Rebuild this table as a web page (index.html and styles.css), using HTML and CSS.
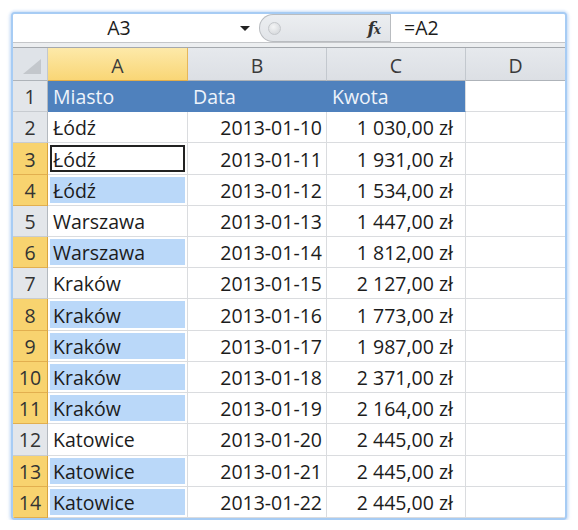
FILE: index.html
```html
<!DOCTYPE html>
<html>
<head>
<meta charset="utf-8">
<link rel="stylesheet" href="styles.css">
</head>
<body>
<div class="frame">
  <div class="fbar">
    <div class="namebox"><span class="ref">A3</span><span class="arrow"></span></div>
    <div class="pill">
      <span class="knob"></span>
      <span class="fx"><i>f</i><i class="x">x</i></span>
    </div>
    <div class="input">=A2</div>
  </div>
  <div class="sep"></div>
  <div class="sheet">
    <div class="corner"><svg width="18" height="15" viewBox="0 0 18 15"><polygon points="0,15 18,15 18,0" fill="#c3c7cc"/></svg></div>
    <div class="ch selcol">A</div>
    <div class="ch">B</div>
    <div class="ch">C</div>
    <div class="ch last">D</div>

    <div class="rh">1</div>
    <div class="c hd">Miasto</div>
    <div class="c hd">Data</div>
    <div class="c hd hdend">Kwota</div>
    <div class="c e"></div>

    <div class="rh">2</div>
    <div class="c">Łódź</div>
    <div class="c r">2013-01-10</div>
    <div class="c m">1 030,00 zł</div>
    <div class="c e"></div>

    <div class="rh sr">3</div>
    <div class="c act">Łódź</div>
    <div class="c r">2013-01-11</div>
    <div class="c m">1 931,00 zł</div>
    <div class="c e"></div>

    <div class="rh sr">4</div>
    <div class="c sel">Łódź</div>
    <div class="c r">2013-01-12</div>
    <div class="c m">1 534,00 zł</div>
    <div class="c e"></div>

    <div class="rh">5</div>
    <div class="c">Warszawa</div>
    <div class="c r">2013-01-13</div>
    <div class="c m">1 447,00 zł</div>
    <div class="c e"></div>

    <div class="rh sr">6</div>
    <div class="c sel">Warszawa</div>
    <div class="c r">2013-01-14</div>
    <div class="c m">1 812,00 zł</div>
    <div class="c e"></div>

    <div class="rh">7</div>
    <div class="c">Kraków</div>
    <div class="c r">2013-01-15</div>
    <div class="c m">2 127,00 zł</div>
    <div class="c e"></div>

    <div class="rh sr">8</div>
    <div class="c sel">Kraków</div>
    <div class="c r">2013-01-16</div>
    <div class="c m">1 773,00 zł</div>
    <div class="c e"></div>

    <div class="rh sr">9</div>
    <div class="c sel">Kraków</div>
    <div class="c r">2013-01-17</div>
    <div class="c m">1 987,00 zł</div>
    <div class="c e"></div>

    <div class="rh sr">10</div>
    <div class="c sel">Kraków</div>
    <div class="c r">2013-01-18</div>
    <div class="c m">2 371,00 zł</div>
    <div class="c e"></div>

    <div class="rh sr">11</div>
    <div class="c sel">Kraków</div>
    <div class="c r">2013-01-19</div>
    <div class="c m">2 164,00 zł</div>
    <div class="c e"></div>

    <div class="rh">12</div>
    <div class="c">Katowice</div>
    <div class="c r">2013-01-20</div>
    <div class="c m">2 445,00 zł</div>
    <div class="c e"></div>

    <div class="rh sr">13</div>
    <div class="c sel">Katowice</div>
    <div class="c r">2013-01-21</div>
    <div class="c m">2 445,00 zł</div>
    <div class="c e"></div>

    <div class="rh sr">14</div>
    <div class="c sel">Katowice</div>
    <div class="c r">2013-01-22</div>
    <div class="c m">2 445,00 zł</div>
    <div class="c e"></div>
  </div>
</div>
</body>
</html>
```
FILE: styles.css
```css
* { box-sizing: border-box; }
html, body { margin: 0; padding: 0; background: #fff; }
body {
  font-family: "Open Sans", "Liberation Sans", sans-serif;
  font-size: 19.5px;
  color: #1c1c1c;
}
.frame {
  margin: 12px 0 0 11px;
  width: 556px;
  height: 508px;
  border: 2px solid #a7ccf4;
  border-radius: 4px;
  box-shadow: 0 0 3px 1px #c9def8, 0 2px 4px rgba(120,160,220,0.35);
  background: #fff;
  display: flex;
  flex-direction: column;
  overflow: hidden;
}
.fbar {
  height: 28px;
  display: flex;
  background: #fff;
}
.namebox {
  width: 246px;
  display: flex;
  align-items: center;
  position: relative;
}
.ref {
  width: 212px;
  text-align: center;
  line-height: 28px;
}
.arrow {
  margin-left: 15px;
  width: 0; height: 0;
  border-left: 5px solid transparent;
  border-right: 5px solid transparent;
  border-top: 5px solid #222;
}
.pill {
  width: 131px;
  height: 28px;
  background: linear-gradient(#eceef1, #e1e4e8);
  border: 1px solid #b9bcc0;
  border-right: none;
  border-radius: 14px 0 0 14px;
  display: flex;
  align-items: center;
  justify-content: space-between;
  padding: 0 10px 0 8px;
}
.knob {
  width: 13px; height: 13px;
  border-radius: 50%;
  background: radial-gradient(circle at 40% 35%, #f4f5f6, #cfd2d6);
  border: 1px solid #c4c7cb;
}
.fx {
  font-family: "DejaVu Serif", "Liberation Serif", serif;
  font-weight: bold;
  font-size: 17px;
  color: #333;
  letter-spacing: -1px;
}
.fx .x { font-size: 12px; }
.input {
  flex: 1;
  border-left: 1px solid #b9bcc0;
  padding-left: 13px;
  line-height: 28px;
}
.sep {
  height: 6px;
  border-top: 1px solid #c4c6c9;
  border-bottom: 1px solid #a4a8ad;
  background: #eceef0;
}
.sheet {
  flex: 1;
  display: grid;
  grid-template-columns: 35px 140px 139px 139px 99px;
  grid-template-rows: 33px repeat(14, 1fr);
}
.corner {
  background: #dfe3e8;
  border-right: 1px solid #c3c8ce;
  border-bottom: 1px solid #aeb3b9;
  display: flex;
  align-items: flex-end;
  justify-content: flex-end;
  padding: 0 6px 6px 0;
}
.ch {
  background: linear-gradient(#e6e9ed, #dcdfe4);
  border-right: 1px solid #c3c8ce;
  border-bottom: 1px solid #aeb3b9;
  display: flex;
  align-items: center;
  justify-content: center;
  padding-top: 3px;
  color: #3a3a3a;
}
.ch.last { border-right: none; }
.ch.selcol {
  background: linear-gradient(#fde9a9, #f9d676);
  border-right: 1px solid #e6b75a;
  border-bottom: 1px solid #e2ad4a;
}
.rh {
  background: #e3e6ea;
  border-right: 1px solid #b4b9bf;
  border-bottom: 1px solid #c8ccd1;
  display: flex;
  align-items: center;
  justify-content: center;
  color: #333;
  padding-top: 1px;
}
.rh.sr {
  background: #f8d36f;
  border-right: 1px solid #d9a43e;
  border-bottom: 1px solid #e2af4f;
}
.c {
  border-right: 1px solid #dadcdf;
  border-bottom: 1px solid #dadcdf;
  display: flex;
  align-items: center;
  padding: 1px 4px 0 5px;
  white-space: nowrap;
}
.c.r { justify-content: flex-end; padding-right: 4px; }
.c.m { justify-content: flex-end; padding-right: 12px; }
.c.e { border-right: none; }
.c.hd {
  background: #4f81bd;
  color: #eef3fa;
  border-right-color: #4f81bd;
  border-bottom-color: #4f81bd;
}
.c.hdend { border-right-color: #dadcdf; }
.c.sel {
  background: #bad8f9;
  box-shadow: inset 0 0 0 2px #fff;
}
.c.act {
  box-shadow: inset 0 0 0 2px #fff, inset 0 0 0 4px #222;
}
```
